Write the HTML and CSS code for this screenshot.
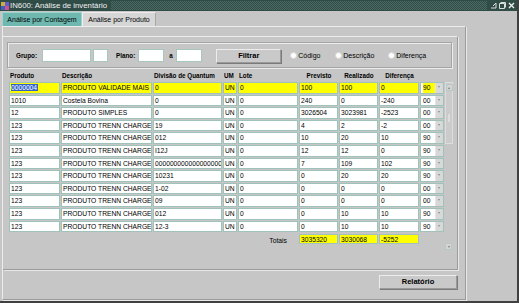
FILE: index.html
```
<!DOCTYPE html>
<html>
<head>
	<meta charset="utf-8">
	<link rel="stylesheet" href="styles.css">
</head>
<body>
<div class="window">
	<div class="titlebar">
		<svg class="appicon" width="8" height="8" viewBox="0 0 8 8">
			<rect x="0" y="0" width="4" height="4" fill="#c8b040"/>
			<rect x="4" y="0" width="4" height="4" fill="#6a5acd"/>
			<rect x="0" y="4" width="4" height="4" fill="#4060c0"/>
			<rect x="4" y="4" width="4" height="4" fill="#d05090"/>
		</svg>
		<span class="title">IN600: Análise de inventário</span>
		<div class="pattern"></div>
		<div class="controls">
			<svg width="7" height="7" viewBox="0 0 7 7"><path d="M1 6h5M6 1v5M3 4l3-3" stroke="#ddd" fill="none"/></svg>
			<svg width="7" height="7" viewBox="0 0 7 7"><path d="M0.5 1.5h5v5h-5zM1.5 0.5h5v5" stroke="#ddd" fill="none"/></svg>
			<svg width="7" height="7" viewBox="0 0 7 7"><path d="M1 1l5 5M6 1l-5 5" stroke="#eee" stroke-width="1.4"/></svg>
		</div>
	</div>

	<div class="tabs">
		<div class="tab active">Análise por Contagem</div>
		<div class="tab">Análise por Produto</div>
	</div>

	<div class="tabpanel">
		<div class="gridpanel">
			<div class="filter">
				<span class="lbl">Grupo:</span>
				<span class="field w-grupo"></span>
				<span class="field w-grupo2"></span>
				<span class="lbl plano">Plano:</span>
				<span class="field w-plano"></span>
				<span class="lbl sep">a</span>
				<span class="field w-plano"></span>
				<span class="button filtrar">Filtrar</span>
				<span class="radio r-codigo"><i></i>Código</span>
				<span class="radio r-desc"><i></i>Descrição</span>
				<span class="radio"><i></i>Diferença</span>
			</div>

			<div class="grid" id="grid">
				<div class="hd">Produto</div>
				<div class="hd">Descrição</div>
				<div class="hd">Divisão de Quantum</div>
				<div class="hd">UM</div>
				<div class="hd">Lote</div>
				<div class="hd c">Previsto</div>
				<div class="hd c">Realizado</div>
				<div class="hd c">Diferença</div>
				<div class="hd"></div>
				<div class="hd"></div>
				<div class="vscroll">
					<div class="sbtn up"></div>
					<div class="thumb"><span class="grip"></span></div>
				</div>
			</div>
		</div>
		<div class="actions">
			<span class="button relatorio">Relatório</span>
		</div>
	</div>
</div>

<script>
	var rows = [
		["0000004", "PRODUTO VALIDADE MAIS", "0", "UN", "0", "100", "100", "0", "90"],
		["1010", "Costela Bovina", "0", "UN", "0", "240", "0", "-240", "00"],
		["12", "PRODUTO SIMPLES", "0", "UN", "0", "3026504", "3023981", "-2523", "00"],
		["123", "PRODUTO TRENN CHARGE", "19", "UN", "0", "4", "2", "-2", "00"],
		["123", "PRODUTO TRENN CHARGE", "012", "UN", "0", "10", "20", "10", "90"],
		["123", "PRODUTO TRENN CHARGE", "I12J", "UN", "0", "12", "12", "0", "90"],
		["123", "PRODUTO TRENN CHARGE", "000000000000000000", "UN", "0", "7", "109", "102", "90"],
		["123", "PRODUTO TRENN CHARGE", "10231", "UN", "0", "0", "20", "20", "90"],
		["123", "PRODUTO TRENN CHARGE", "1-02", "UN", "0", "0", "0", "0", "00"],
		["123", "PRODUTO TRENN CHARGE", "09", "UN", "0", "0", "0", "0", "00"],
		["123", "PRODUTO TRENN CHARGE", "012", "UN", "0", "0", "10", "10", "90"],
		["123", "PRODUTO TRENN CHARGE", "12-3", "UN", "0", "0", "10", "10", "90"]
	];

	var grid = document.getElementById('grid');
	var html = '';
	for (var i = 0; i < rows.length; i++) {
		var r = rows[i];
		var cls = i == 0 ? 'cell cur' : 'cell';
		for (var j = 0; j < 8; j++) {
			var txt = r[j];
			if (i == 0 && j == 0) { txt = '<span class="sel">' + txt + '</span>'; }
			html += '<div class="' + cls + '">' + txt + '</div>';
		}
		html += '<div class="' + cls + ' drop"><span class="val">' + r[8] + '</span><span class="arrow"></span></div>';
		// the scrollbar covers the last column of the first five rows
		if (i >= 5) { html += '<div class="spacer"></div>'; }
	}
	// totals
	html += '<div class="totlbl">Totais</div>';
	html += '<div class="cell tot">3035320</div><div class="cell tot">3030068</div><div class="cell tot">-5252</div>';
	html += '<div class="spacer"></div><div class="sbtn down"></div>';
	grid.insertAdjacentHTML('beforeend', html);
</script>
</body>
</html>
```

FILE: styles.css
```
html, body {
	margin: 0;
	padding: 0;
	background: #c6c6c6;
}

body {
	font-family: "Liberation Sans", Arial, sans-serif;
	font-size: 7px;
	color: #000;
}

.window {
	width: 517px;
	height: 301px;
	border-right: 2px solid #404040;
	border-bottom: 2px solid #404040;
	background: #c6c6c6;
	overflow: hidden;
}

/* title bar */
.titlebar {
	height: 11px;
	display: flex;
	align-items: center;
	background: #2f4c47;
	color: #f0f0f0;
}

.appicon {
	margin: 0 1px 0 1px;
}

.title {
	font-size: 7.8px;
	white-space: nowrap;
}

.pattern {
	flex: 1;
	height: 9px;
	margin: 0 3px 0 4px;
	background-image: repeating-conic-gradient(#4e6a64 0 25%, #2f4c47 0 50%);
	background-size: 2px 2px;
}

.controls {
	display: flex;
	gap: 2px;
	padding-right: 2px;
}

/* tabs */
.tabs {
	display: flex;
	height: 15px;
	padding: 1px 0 0 2px;
	box-sizing: border-box;
	align-items: stretch;
}

.tab {
	width: 74px;
	box-sizing: border-box;
	text-align: center;
	line-height: 13px;
	font-size: 7px;
	background: #d6d6d6;
	border: 1px solid #a8a8a8;
	border-bottom: none;
	border-left-color: #eeeeee;
	border-top-color: #eeeeee;
}

.tab.active {
	width: 80px;
	background: #6fb8b0;
	border-color: #9fd4ce;
}

/* tab body */
.tabpanel {
	width: 464px;
	height: 274px;
	margin-left: 2px;
	box-sizing: border-box;
	border-top: 1px solid #ececec;
	border-left: 1px solid #ececec;
	border-right: 1px solid #9a9a9a;
	border-bottom: 1px solid #9a9a9a;
	box-shadow: 1px 1px 0 #e8e8e8;
	padding: 9px 7px 0 0;
	display: flex;
	flex-direction: column;
}

.gridpanel {
	height: 234px;
	flex: none;
	box-sizing: border-box;
	border-top: 1px solid #ececec;
	border-right: 1px solid #9a9a9a;
	border-bottom: 1px solid #9a9a9a;
	box-shadow: 1px 1px 0 #e8e8e8;
	padding: 5px 5px 0 4px;
}

/* filter bar */
.filter {
	height: 26px;
	box-sizing: border-box;
	border: 1px solid #a4a4a4;
	box-shadow: inset 1px 1px 0 #ececec, 1px 1px 0 #ececec;
	display: flex;
	align-items: center;
	padding-left: 8px;
	padding-top: 1px;
}

.lbl {
	font-weight: bold;
	margin-right: 5px;
	font-size: 6.3px;
}

.lbl.plano {
	margin-left: 6px;
	margin-right: 3px;
}

.lbl.sep {
	margin-left: 3px;
	margin-right: 3.5px;
}

.field {
	display: inline-block;
	height: 13px;
	box-sizing: border-box;
	background: #fff;
	border: 1px solid #a6c6be;
	margin-right: 2px;
}

.w-grupo { width: 49px; }
.w-grupo2 { width: 15px; }
.w-plano { width: 26px; }

.button {
	display: inline-block;
	box-sizing: border-box;
	background: #c9c9c9;
	border: 1px solid #9a9a9a;
	border-top-color: #ececec;
	border-left-color: #ececec;
	box-shadow: 1px 1px 0 #7a7a7a;
	text-align: center;
	font-weight: bold;
	font-size: 7.5px;
}

.filtrar {
	width: 65px;
	height: 14px;
	line-height: 12px;
	margin-left: 12px;
	margin-right: 9px;
}

.radio {
	display: inline-flex;
	align-items: center;
	font-size: 7px;
}

.radio i {
	display: inline-block;
	width: 5px;
	height: 5px;
	border-radius: 50%;
	background: #fff;
	border: 1px solid #d8d8d8;
	margin-right: 1px;
}

.r-codigo { width: 45px; }
.r-desc { width: 53px; }

/* data grid */
.grid {
	display: grid;
	grid-template-columns: 51px 91px 69px 14px 60px 39px 39px 40px 24px 8px;
	grid-template-rows: 10px repeat(12, 11.6px) 11px;
	column-gap: 1px;
	row-gap: 1px;
	margin: 3px 0 0 2px;
}

.hd {
	font-weight: bold;
	font-size: 6.3px;
	line-height: 10px;
	white-space: nowrap;
	padding-left: 1px;
}

.hd.c {
	text-align: center;
}

.cell {
	background: #fff;
	border: 1px solid #9fc2ba;
	box-sizing: border-box;
	font-size: 6.7px;
	line-height: 9.6px;
	padding-left: 1px;
	white-space: nowrap;
	overflow: hidden;
}

.cell.cur {
	background: #ffff00;
}

.sel {
	background: #3264c8;
	color: #fff;
	padding-right: 1px;
}

.drop {
	display: flex;
	padding-left: 2px;
}

.drop .val {
	flex: 1;
}

.drop.cur .val {
	background: #ffff00;
}

.drop.cur {
	background: #fff;
}

.arrow {
	width: 7px;
	background: #d8d8d8;
	border-left: 1px solid #e4e4e4;
	position: relative;
}

.arrow::after {
	content: "";
	position: absolute;
	left: 2px;
	top: 3px;
	border-left: 1.5px solid transparent;
	border-right: 1.5px solid transparent;
	border-top: 2px solid #8a8a8a;
}

.vscroll {
	grid-column: 10;
	grid-row: 2 / span 5;
	background: #cbcbcb;
	border: 1px solid #dcdcdc;
	box-sizing: border-box;
	display: flex;
	flex-direction: column;
	align-items: center;
	padding-top: 1px;
}

.sbtn {
	width: 7px;
	height: 7px;
	box-sizing: border-box;
	background: #d4d4d4;
	border: 1px solid #b8c8c4;
	position: relative;
}

.sbtn::after {
	content: "";
	position: absolute;
	left: 1.5px;
	top: 2px;
	border-left: 1.5px solid transparent;
	border-right: 1.5px solid transparent;
}

.sbtn.up::after {
	border-bottom: 2px solid #7a7a7a;
}

.sbtn.down::after {
	border-top: 2px solid #7a7a7a;
}

.sbtn.down {
	grid-column: 10;
	align-self: end;
	margin-bottom: -6px;
}

.thumb {
	flex: 1;
	width: 6px;
	margin-top: 2px;
	display: flex;
	align-items: center;
	justify-content: center;
}

.grip {
	width: 2px;
	height: 8px;
	background-image: radial-gradient(#f0f0f0 0.6px, transparent 0.8px);
	background-size: 2px 2px;
}

.totlbl {
	grid-column: 4 / span 2;
	text-align: right;
	padding-right: 11px;
	line-height: 11px;
	font-size: 6.8px;
	margin-top: 2px;
}

.cell.tot {
	background: #ffff00;
	margin-top: 1px;
}

/* bottom action bar */
.actions {
	display: flex;
	justify-content: flex-end;
	padding: 5px 0 0 0;
	margin-right: 1px;
}

.relatorio {
	width: 78px;
	height: 14px;
	line-height: 12px;
}
```
